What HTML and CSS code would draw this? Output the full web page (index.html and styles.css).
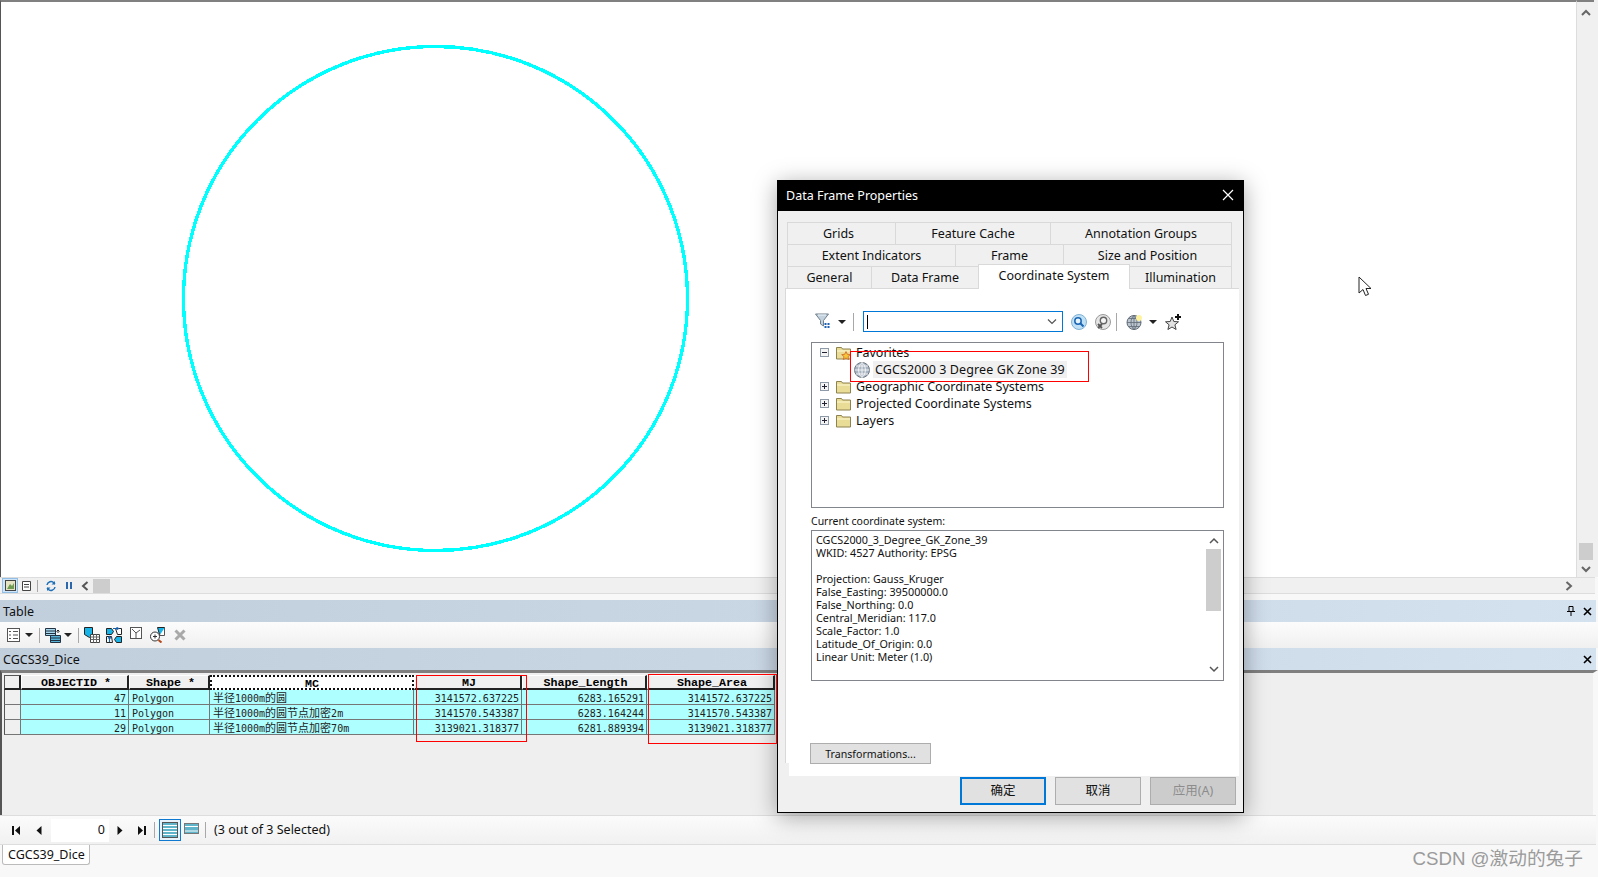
FILE: index.html
```html
<!DOCTYPE html>
<html lang="en">

<head>
  <meta charset="UTF-8">
  <title>Data Frame Properties</title>
  <link rel="stylesheet" href="styles.css">
</head>

<body>
  <div class="app">

    <!-- Map view -->
    <div class="map-row">
      <div class="map">
        <svg class="map-canvas" width="1575" height="575" viewBox="0 0 1575 575">
          <circle cx="434.500" cy="296.500" r="252" fill="none" stroke="#00ffff" stroke-width="3.400" shape-rendering="crispEdges"/>
        </svg>
      </div>
      <div class="vscroll">
        <svg class="chev" width="10" height="8" viewBox="0 0 10 8"><path d="M1 6l4-4 4 4" fill="none" stroke="#666" stroke-width="2"/></svg>
        <div class="vscroll-track"></div>
        <div class="vscroll-thumb"></div>
        <svg class="chev" width="10" height="8" viewBox="0 0 10 8"><path d="M1 2l4 4 4-4" fill="none" stroke="#666" stroke-width="2"/></svg>
      </div>
    </div>

    <!-- Map status bar -->
    <div class="map-bar">
      <span class="view-btn view-btn-on">
        <svg width="11" height="11" viewBox="0 0 11 11"><rect x=".5" y=".5" width="10" height="10" fill="#e6e2c4" stroke="#444"/><path d="M2 9l3-5 2 2 2-3v6z" fill="#6f9a52"/></svg>
      </span>
      <span class="view-btn">
        <svg width="9" height="10" viewBox="0 0 9 10"><path d="M.5.5h8v9h-8z" fill="#fff" stroke="#444"/><path d="M2 3.500h5M2 6h5" stroke="#444"/></svg>
      </span>
      <span class="sep"></span>
      <svg class="bar-icon" width="12" height="12" viewBox="0 0 12 12"><path d="M2 5a4 4 0 0 1 7-2l1 1M10 7a4 4 0 0 1-7 2L2 8" fill="none" stroke="#1e6fb8" stroke-width="1.5"/><path d="M10 1v3.500H6.500zM2 11V7.500h3.500z" fill="#1e6fb8"/></svg>
      <svg class="bar-icon" width="8" height="9" viewBox="0 0 8 9"><path d="M1 1h2v7H1zM5 1h2v7H5z" fill="#2a67ad"/></svg>
      <svg class="bar-icon bar-back" width="8" height="10" viewBox="0 0 8 10"><path d="M6.500 1L2 5l4.500 4" fill="none" stroke="#555" stroke-width="2"/></svg>
      <div class="hthumb"></div>
      <svg class="bar-forward" width="8" height="10" viewBox="0 0 8 10"><path d="M1.500 1L6 5 1.500 9" fill="none" stroke="#666" stroke-width="2"/></svg>
    </div>

    <!-- Table window -->
    <div class="title-bar table-title">
      <span>Table</span>
      <span class="title-tools">
        <svg width="8" height="10" viewBox="0 0 8 10"><path d="M2 .5h4v5H2zM0 5.500h8M4 6v4" fill="none" stroke="#000"/></svg>
        <svg width="9" height="9" viewBox="0 0 9 9"><path d="M1 1l7 7M8 1L1 8" stroke="#000" stroke-width="1.600"/></svg>
      </span>
    </div>

    <div class="table-tools">
      <svg class="tool-list" width="13" height="14" viewBox="0 0 13 14"><rect x=".5" y=".5" width="12" height="13" fill="#fff" stroke="#555"/><path d="M6 3.500h5M6 7h5M6 10.500h5" stroke="#555"/><path d="M2 3h2v1H2zM2 6.500h2v1H2zM2 10h2v1H2z" fill="#555"/></svg>
      <span class="caret"></span>
      <span class="sep"></span>
      <svg class="tool-rel" width="16" height="15" viewBox="0 0 16 15"><path d="M.5.5h10v7H.5z" fill="#a8d8ee" stroke="#234"/><path d="M.5 3h10M.5 5.500h10" stroke="#234"/><path d="M5.500 7.500h10v7h-10z" fill="#57b2d8" stroke="#234"/><path d="M5.500 10h10M5.500 12.500h10" stroke="#234"/><path d="M13 2v3M11.500 3.500l1.500-1.500 1.500 1.500" fill="none" stroke="#222"/></svg>
      <span class="caret"></span>
      <span class="sep"></span>
      <svg class="tool-ic" width="16" height="16" viewBox="0 0 16 16"><path d="M.5.500h8v8l-3 2-5-3z" fill="#16b4e8" stroke="#222"/><path d="M6.500 7.500h9v8h-9z" fill="#fff" stroke="#444"/><path d="M6.500 10h9M6.500 12.500h9M9.500 7.500v8M12.500 7.500v8" stroke="#666"/></svg>
      <svg class="tool-ic" width="16" height="16" viewBox="0 0 16 16"><path d="M.5 1.500h5l2 3-2 3h-5zM15.500 15.500h-5l-2-3 2-3h5z" fill="#16b4e8" stroke="#222"/><path d="M9.500 1.500h6v6h-4zM.5 9.500h5l1 6h-6z" fill="#fff" stroke="#222"/><path d="M7 1.500h5M10.500.3l2 1.200-2 1.200M3.500 15v-5M2 11.500l1.500-2 1.500 2" fill="none" stroke="#1560ad" stroke-width="1.200"/></svg>
      <svg class="tool-ic tool-clear" width="12" height="12" viewBox="0 0 12 12"><rect x=".5" y=".5" width="11" height="11" fill="#fff" stroke="#555"/><path d="M2 2l4 4 4-3M6 6v5" fill="none" stroke="#555"/></svg>
      <svg class="tool-ic tool-zoom" width="16" height="16" viewBox="0 0 16 16"><path d="M8.500.500h7v7h-5z" fill="#16b4e8" stroke="#222"/><path d="M10.500 8.500h5V1" fill="#fff" stroke="#555"/><circle cx="6" cy="9.500" r="4.500" fill="#fff" stroke="#333"/><path d="M4 9.500h4M6 7.500v4" stroke="#333"/><path d="M9.500 13l3 2.500" stroke="#b2481c" stroke-width="2"/></svg>
      <svg class="tool-ic" width="12" height="12" viewBox="0 0 12 12"><path d="M1.500 1.500l9 9M10.500 1.500l-9 9" stroke="#a9a9a9" stroke-width="3"/></svg>
    </div>

    <div class="title-bar layer-title">
      <span>CGCS39_Dice</span>
      <span class="title-tools">
        <svg width="9" height="9" viewBox="0 0 9 9"><path d="M1 1l7 7M8 1L1 8" stroke="#000" stroke-width="1.600"/></svg>
      </span>
    </div>

    <div class="grid-area">
      <div class="grid-row">
        <div class="cell-h"></div>
        <div class="cell-h">OBJECTID *</div>
        <div class="cell-h">Shape *</div>
        <div class="cell-h cell-focus">MC</div>
        <div class="cell-h">MJ</div>
        <div class="cell-h">Shape_Length</div>
        <div class="cell-h">Shape_Area</div>
      </div>
      <div class="grid-row">
        <div class="cell-sel"></div>
        <div class="cell num">47</div>
        <div class="cell">Polygon</div>
        <div class="cell"><span class="cjk">半径</span>1000m<span class="cjk">的圆</span></div>
        <div class="cell num">3141572.637225</div>
        <div class="cell num">6283.165291</div>
        <div class="cell num">3141572.637225</div>
      </div>
      <div class="grid-row">
        <div class="cell-sel"></div>
        <div class="cell num">11</div>
        <div class="cell">Polygon</div>
        <div class="cell"><span class="cjk">半径</span>1000m<span class="cjk">的圆节点加密</span>2m</div>
        <div class="cell num">3141570.543387</div>
        <div class="cell num">6283.164244</div>
        <div class="cell num">3141570.543387</div>
      </div>
      <div class="grid-row">
        <div class="cell-sel"></div>
        <div class="cell num">29</div>
        <div class="cell">Polygon</div>
        <div class="cell"><span class="cjk">半径</span>1000m<span class="cjk">的圆节点加密</span>70m</div>
        <div class="cell num">3139021.318377</div>
        <div class="cell num">6281.889394</div>
        <div class="cell num">3139021.318377</div>
      </div>
    </div>

    <!-- Record navigation -->
    <div class="nav-bar">
      <svg class="nav-first" width="9" height="9" viewBox="0 0 9 9"><path d="M0 0h2v9H0zM8 0v9L3 4.500z" fill="#111"/></svg>
      <svg class="nav-prev" width="6" height="9" viewBox="0 0 6 9"><path d="M5.500 0v9L.5 4.500z" fill="#111"/></svg>
      <div class="nav-input">0</div>
      <svg class="nav-next" width="6" height="9" viewBox="0 0 6 9"><path d="M.5 0v9l5-4.500z" fill="#111"/></svg>
      <svg class="nav-last" width="9" height="9" viewBox="0 0 9 9"><path d="M1 0v9l5-4.500zM7 0h2v9H7z" fill="#111"/></svg>
      <span class="sep"></span>
      <span class="rec-btn rec-btn-on">
        <svg width="16" height="16" viewBox="0 0 16 16"><rect x=".5" y=".5" width="15" height="15" fill="#5fb4c9" stroke="#555"/><path d="M1 3.500h14M1 6.500h14M1 9.500h14M1 12.500h14" stroke="#fff"/></svg>
      </span>
      <svg class="rec-plain" width="15" height="11" viewBox="0 0 15 11"><rect x=".5" y=".5" width="14" height="10" fill="#5fb4c9" stroke="#777"/><path d="M1 3.500h13M1 8h13" stroke="#fff"/></svg>
      <span class="sep"></span>
      <span class="nav-text">(3 out of 3 Selected)</span>
    </div>

    <div class="tab-strip">
      <div class="table-tab">CGCS39_Dice</div>
    </div>
  </div>

  <!-- Red markup drawn over the screenshot -->
  <div class="mark mark-mj"></div>
  <div class="mark mark-area"></div>

  <!-- Mouse pointer -->
  <svg class="pointer" width="14" height="21" viewBox="0 0 14 21"><path d="M1 1v16l4-3.500 2.500 6 3-1.200-2.500-5.800h5z" fill="#fff" stroke="#222"/></svg>

  <!-- Dialog -->
  <div class="dialog">
    <div class="dialog-title">
      <span>Data Frame Properties</span>
      <svg width="12" height="12" viewBox="0 0 12 12"><path d="M1 1l10 10M11 1L1 11" stroke="#fff" stroke-width="1.200"/></svg>
    </div>

    <div class="tabs">
      <div class="tab-row tab-row-a">
        <div class="tab tab-grids">Grids</div>
        <div class="tab">Feature Cache</div>
        <div class="tab">Annotation Groups</div>
      </div>
      <div class="tab-row tab-row-b">
        <div class="tab">Extent Indicators</div>
        <div class="tab">Frame</div>
        <div class="tab">Size and Position</div>
      </div>
      <div class="tab-row tab-row-c">
        <div class="tab">General</div>
        <div class="tab">Data Frame</div>
        <div class="tab tab-active">Coordinate System</div>
        <div class="tab">Illumination</div>
      </div>
    </div>

    <div class="panel">
      <div class="cs-tools">
        <svg class="ic-funnel" width="16" height="17" viewBox="0 0 16 17"><path d="M.5 1h13L8.500 7.500V13L5.500 11V7.500z" fill="#c3d2de" stroke="#6f7f8b"/><path d="M3 2h8" stroke="#eef4f8"/><path d="M9.500 10h2v2h-2zM12.500 10h2v2h-2zM9.500 13h2v2h-2zM12.500 13h2v2h-2z" fill="#1d62b5"/></svg>
        <span class="caret caret-funnel"></span>
        <span class="sep sep-combo"></span>
        <div class="combo">
          <span class="combo-cursor"></span>
          <svg width="10" height="6" viewBox="0 0 10 6"><path d="M1 .5l4 4 4-4" fill="none" stroke="#555" stroke-width="1.200"/></svg>
        </div>
        <svg class="ic-search" width="16" height="16" viewBox="0 0 16 16"><circle cx="8" cy="8" r="7.500" fill="#bfe0f5" stroke="#7eb1d4"/><circle cx="7" cy="7" r="3.200" fill="#e6f4fc" stroke="#1c66b3" stroke-width="1.500"/><path d="M9.500 9.500l3 3" stroke="#1c66b3" stroke-width="2"/></svg>
        <svg class="ic-clear" width="16" height="16" viewBox="0 0 16 16"><circle cx="8" cy="8" r="7.500" fill="#e6e6e6" stroke="#9a9a9a"/><circle cx="8.500" cy="6.500" r="3.200" fill="#f5f5f5" stroke="#666" stroke-width="1.400"/><path d="M3 10l4 4M7 10l-4 4" stroke="#555" stroke-width="1.800"/></svg>
        <span class="sep sep-globe"></span>
        <svg class="ic-globe" width="17" height="16" viewBox="0 0 17 16"><circle cx="8" cy="8.500" r="7" fill="#bcc6d0" stroke="#5f6a75"/><path d="M1 8.500h14M8 1.500v14M3 4.500h10M3 12.500h10M8 1.500c-4 3-4 11 0 14M8 1.500c4 3 4 11 0 14" fill="none" stroke="#5f6a75" stroke-width=".8"/><circle cx="13" cy="4" r="3" fill="#fff3a0"/></svg>
        <span class="caret caret-globe"></span>
        <svg class="ic-star" width="17" height="16" viewBox="0 0 17 16"><path d="M7 3l1.800 4.500 4.700.3-3.600 3 1.200 4.700L7 13l-4.100 2.500 1.200-4.700-3.600-3 4.700-.3z" fill="#e2e2e2" stroke="#444"/><path d="M13 0v6M10 3h6" stroke="#111" stroke-width="2"/></svg>
      </div>

      <div class="tree">
        <div class="tree-row">
          <span class="expander"><svg width="9" height="9" viewBox="0 0 9 9"><rect x=".5" y=".5" width="8" height="8" fill="#f4f4f4" stroke="#8e9aa8"/><path d="M2 4.500h5" stroke="#223"/></svg></span>
          <svg class="folder" width="15" height="14" viewBox="0 0 15 14"><path d="M.5 1.500h5l1 1.500h8v10H.5z" fill="#e9dc97" stroke="#8d8250"/><path d="M1 5h13" stroke="#fff8d2"/><path d="M10 5.500l1.300 2.800 3 .3-2.300 2 .7 3-2.700-1.600-2.700 1.600.7-3-2.300-2 3-.3z" fill="#f6c63a" stroke="#d2661f" stroke-width=".8"/></svg>
          <span class="tree-label">Favorites</span>
        </div>
        <div class="tree-row tree-child">
          <svg class="globe" width="16" height="16" viewBox="0 0 16 16"><circle cx="8" cy="8" r="7.500" fill="#a9b4c2" stroke="#6c7682"/><path d="M.5 8h15M8 .5v15M2 4h12M2 12h12M8 .5c-4.500 3-4.500 12 0 15M8 .5c4.500 3 4.500 12 0 15" fill="none" stroke="#fff" stroke-width=".8"/></svg>
          <span class="tree-label tree-hit">CGCS2000 3 Degree GK Zone 39</span>
        </div>
        <div class="tree-row">
          <span class="expander"><svg width="9" height="9" viewBox="0 0 9 9"><rect x=".5" y=".5" width="8" height="8" fill="#f4f4f4" stroke="#8e9aa8"/><path d="M2 4.500h5M4.500 2v5" stroke="#223"/></svg></span>
          <svg class="folder" width="15" height="14" viewBox="0 0 15 14"><path d="M.5 1.500h5l1 1.500h8v10H.5z" fill="#e9dc97" stroke="#8d8250"/><path d="M1 5h13" stroke="#fff8d2"/></svg>
          <span class="tree-label">Geographic Coordinate Systems</span>
        </div>
        <div class="tree-row">
          <span class="expander"><svg width="9" height="9" viewBox="0 0 9 9"><rect x=".5" y=".5" width="8" height="8" fill="#f4f4f4" stroke="#8e9aa8"/><path d="M2 4.500h5M4.500 2v5" stroke="#223"/></svg></span>
          <svg class="folder" width="15" height="14" viewBox="0 0 15 14"><path d="M.5 1.500h5l1 1.500h8v10H.5z" fill="#e9dc97" stroke="#8d8250"/><path d="M1 5h13" stroke="#fff8d2"/></svg>
          <span class="tree-label">Projected Coordinate Systems</span>
        </div>
        <div class="tree-row">
          <span class="expander"><svg width="9" height="9" viewBox="0 0 9 9"><rect x=".5" y=".5" width="8" height="8" fill="#f4f4f4" stroke="#8e9aa8"/><path d="M2 4.500h5M4.500 2v5" stroke="#223"/></svg></span>
          <svg class="folder" width="15" height="14" viewBox="0 0 15 14"><path d="M.5 1.500h5l1 1.500h8v10H.5z" fill="#e9dc97" stroke="#8d8250"/><path d="M1 5h13" stroke="#fff8d2"/></svg>
          <span class="tree-label">Layers</span>
        </div>
        <div class="mark mark-fav"></div>
      </div>

      <div class="cs-label">Current coordinate system:</div>
      <div class="cs-box">
        <div class="cs-text">
          <div>CGCS2000_3_Degree_GK_Zone_39</div>
          <div>WKID: 4527 Authority: EPSG</div>
          <div>&nbsp;</div>
          <div>Projection: Gauss_Kruger</div>
          <div>False_Easting: 39500000.0</div>
          <div>False_Northing: 0.0</div>
          <div>Central_Meridian: 117.0</div>
          <div>Scale_Factor: 1.0</div>
          <div>Latitude_Of_Origin: 0.0</div>
          <div>Linear Unit: Meter (1.0)</div>
        </div>
        <div class="cs-scroll">
          <svg width="10" height="7" viewBox="0 0 10 7"><path d="M1 6l4-4 4 4" fill="none" stroke="#555" stroke-width="1.500"/></svg>
          <div class="cs-thumb"></div>
          <svg width="10" height="7" viewBox="0 0 10 7"><path d="M1 1l4 4 4-4" fill="none" stroke="#555" stroke-width="1.500"/></svg>
        </div>
      </div>

      <div class="btn btn-transform">Transformations...</div>
    </div>

    <div class="dialog-actions">
      <div class="btn btn-main btn-ok">确定</div>
      <div class="btn btn-main">取消</div>
      <div class="btn btn-main btn-off">应用(A)</div>
    </div>
  </div>

  <div class="watermark">CSDN @激动的兔子</div>
</body>

</html>
```

FILE: styles.css
```css
/* General setup */
* {
  box-sizing: border-box;
}

body {
  margin: 0;
  width: 1598px;
  height: 877px;
  position: relative;
  overflow: hidden;
  background: #f8f8f8;
  color: #111;
  font-family: "Noto Sans", "Noto Sans CJK SC", sans-serif;
  font-size: 12.5px;
}

.app {
  display: flex;
  flex-direction: column;
  height: 877px;
}

.sep {
  display: inline-block;
  width: 1px;
  height: 16px;
  background: #a8a8a8;
  flex: none;
}

.caret {
  width: 0;
  height: 0;
  flex: none;
  border-left: 4px solid transparent;
  border-right: 4px solid transparent;
  border-top: 4px solid #222;
}

/* Map view */
.map-row {
  display: flex;
  height: 577px;
  background: #f0f0f0;
}

.map {
  width: 1577px;
  border-top: 2px solid #808080;
  border-left: 1px solid #555;
  border-right: 1px solid #ddd;
  background: #fff;
}

.map-canvas {
  display: block;
}

.vscroll {
  width: 17px;
  border-top: 2px solid #808080;
  display: flex;
  flex-direction: column;
  align-items: center;
  padding: 7px 0 4px;
}

.vscroll-track {
  flex: 1;
}

.vscroll-thumb {
  width: 14px;
  height: 17px;
  margin-bottom: 5px;
  background: #cdcdcd;
}

/* Map status bar */
.map-bar {
  display: flex;
  align-items: center;
  height: 17px;
  width: 1595px;
  padding-left: 2px;
  background: #f0f0f0;
  border-top: 1px solid #ddd;
  border-bottom: 1px solid #ddd;
}

.view-btn {
  width: 16px;
  height: 15px;
  display: flex;
  justify-content: center;
  align-items: center;
}

.view-btn-on {
  background: #cfe4f6;
  border: 1px solid #93bfe5;
}

.map-bar .sep {
  height: 12px;
  margin: 0 7px 0 3px;
}

.bar-icon {
  margin-right: 8px;
}

.bar-back {
  margin-right: 4px;
}

.hthumb {
  width: 17px;
  height: 14px;
  background: #cdcdcd;
}

.bar-forward {
  margin-left: auto;
  margin-right: 22px;
}

/* Table window */
.title-bar {
  display: flex;
  justify-content: space-between;
  align-items: center;
  height: 22px;
  width: 1596px;
  padding: 0 4px 0 3px;
  background: linear-gradient(90deg, #c1cedc, #c9d6e4 50%, #d4e1ef);
}

.table-title {
  margin-top: 6px;
}

.title-tools {
  display: flex;
  align-items: center;
  gap: 8px;
}

.table-tools {
  display: flex;
  align-items: center;
  height: 26px;
  padding-left: 7px;
  background: linear-gradient(#fcfcfc, #f0f0f0);
}

.tool-list {
  margin-right: 5px;
}

.table-tools .caret {
  margin-right: 6px;
}

.table-tools .sep {
  height: 15px;
  margin-right: 5px;
}

.tool-rel {
  margin-right: 3px;
}

.tool-ic {
  margin-right: 6px;
}

.tool-clear {
  margin: 0 7px 4px 2px;
}

.tool-zoom {
  margin-right: 9px;
}

/* Attribute grid */
.grid-area {
  height: 145px;
  padding: 2px 0 0 2px;
  background: #efefef;
  border-top: 3px solid #7f7f7f;
  border-left: 2px solid #555;
  border-right: 5px solid #f8f8f8;
  font-family: "DejaVu Sans Mono", monospace;
  font-size: 10px;
  color: #222;
}

.grid-row {
  display: grid;
  grid-template-columns: 17px 108px 81px 204px 108px 125px 128px;
  grid-template-rows: 15px;
  height: 15px;
}

.cell-h {
  display: flex;
  justify-content: center;
  align-items: center;
  padding: 2px 0 0 3px;
  background: #f0f0f0;
  border-top: 1px solid #fff;
  border-left: 1px solid #fff;
  border-right: 2px solid #222;
  border-bottom: 2px solid #222;
  font-family: "Liberation Mono", monospace;
  font-size: 11.67px;
  font-weight: bold;
  line-height: 12px;
  color: #000;
  white-space: pre;
}

.cell-h:first-child {
  border-left: 1px solid #555;
  border-top: 1px solid #555;
}

.cell-focus {
  padding-left: 0;
  border: 2px dotted #111;
  background: #fff;
}

.cell,
.cell-sel {
  border-right: 1px solid #767676;
  border-bottom: 1px solid #767676;
  line-height: 14px;
  white-space: nowrap;
  padding: 0 3px;
}

.cell {
  background: #aeffff;
  padding-top: 2px;
}

.cell-sel {
  background: #f0f0f0;
  border-left: 1px solid #555;
}

.num {
  text-align: right;
  padding-right: 2px;
}

.cjk {
  font-family: "Noto Sans CJK SC", sans-serif;
  font-size: 11px;
  line-height: 1;
}

/* Record navigation */
.nav-bar {
  display: flex;
  align-items: center;
  height: 30px;
  padding-left: 12px;
  background: linear-gradient(#fbfbfb, #f1f1f1);
  border-top: 1px solid #ddd;
  border-bottom: 1px solid #ddd;
  width: 1596px;
}

.nav-first {
  margin-right: 15px;
}

.nav-prev {
  margin-right: 9px;
}

.nav-input {
  width: 58px;
  height: 23px;
  line-height: 21px;
  background: #fff;
  text-align: right;
  padding-right: 4px;
  margin-right: 8px;
}

.nav-next {
  margin-right: 14px;
}

.nav-last {
  margin-right: 8px;
}

.rec-btn {
  display: flex;
  justify-content: center;
  align-items: center;
  width: 22px;
  height: 22px;
  margin-left: 4px;
  border: 1px solid #0f78d0;
  background: #e8f2fa;
}

.rec-plain {
  margin: 0 6px 3px 3px;
}

.nav-text {
  margin: 0 0 2px 8px;
}

.tab-strip {
  flex: 1;
  padding-left: 2px;
  background: #f8f8f8;
}

.table-tab {
  width: 88px;
  height: 20px;
  line-height: 19px;
  padding-left: 5px;
  background: #fff;
  border: 1px solid #bbb;
  border-top: 0;
  border-radius: 0 0 3px 3px;
}

/* Red markup, drawn over the rest */
.mark {
  position: absolute;
  border: 1px solid #f00;
  z-index: 5;
}

.mark-mj {
  left: 416px;
  top: 675px;
  width: 111px;
  height: 67px;
}

.mark-area {
  left: 648px;
  top: 674px;
  width: 129px;
  height: 70px;
}

.mark-fav {
  left: 38px;
  top: 8px;
  width: 239px;
  height: 31px;
}

.pointer {
  position: absolute;
  left: 1358px;
  top: 276px;
}

/* Dialog */
.dialog {
  position: absolute;
  left: 777px;
  top: 180px;
  width: 467px;
  height: 633px;
  background: #f0f0f0;
  border: 1px solid #000;
  border-top: 0;
  box-shadow: 0 4px 22px rgba(0, 0, 0, 0.35);
  z-index: 3;
}

.dialog-title {
  display: flex;
  justify-content: space-between;
  align-items: center;
  height: 31px;
  padding: 0 9px 1px 8px;
  background: #000;
  color: #fff;
}

.tabs {
  margin: 11px 9px 0;
  width: 445px;
}

.tab-row {
  display: grid;
  height: 22px;
}

.tab-row-a {
  grid-template-columns: 108px 155px 182px;
}

.tab-row-b {
  grid-template-columns: 168px 108px 169px;
}

.tab-row-c {
  grid-template-columns: 84px 107px 151px 103px;
}

.tab {
  height: 22px;
  line-height: 21px;
  text-align: center;
  background: #f0f0f0;
  border: 1px solid #d9d9d9;
  border-width: 1px 1px 0 1px;
  margin-right: -1px;
}

.tab:last-child {
  margin-right: 0;
}

.tab-grids {
  padding-right: 6px;
}

.tab-active {
  position: relative;
  height: 25px;
  margin-top: -2px;
  line-height: 21px;
  background: #fff;
  z-index: 1;
}

.panel {
  position: relative;
  width: 454px;
  height: 488px;
  margin-left: 7px;
  padding: 22px 0 0 25px;
  background: #fff;
  border-top: 1px solid #d9d9d9;
  border-left: 1px solid #d9d9d9;
}

/* notch left of the panel foot */
.panel::after {
  content: "";
  position: absolute;
  left: -1px;
  bottom: 0;
  width: 4px;
  height: 13px;
  background: #f0f0f0;
}

.cs-tools {
  display: flex;
  align-items: center;
  height: 21px;
}

.ic-funnel {
  margin-left: 4px;
}

.caret-funnel {
  margin-left: 7px;
}

.sep-combo {
  height: 18px;
  margin: 0 9px 0 7px;
}

.combo {
  display: flex;
  justify-content: space-between;
  align-items: center;
  width: 200px;
  height: 21px;
  padding: 0 5px 0 3px;
  border: 1px solid #0078d7;
}

.combo-cursor {
  width: 1px;
  height: 14px;
  background: #000;
}

.ic-search,
.ic-clear {
  margin-left: 8px;
}

.sep-globe {
  height: 18px;
  margin: 0 9px 0 5px;
}

.caret-globe {
  margin: 0 8px 0 6px;
}

.tree {
  position: relative;
  width: 413px;
  height: 166px;
  margin-top: 10px;
  padding: 1px 0 0 8px;
  border: 1px solid #82868c;
  line-height: 17px;
}

.tree-row {
  display: flex;
  align-items: center;
  height: 17px;
}

.expander {
  display: flex;
  width: 16px;
}

.folder {
  margin-right: 5px;
}

.tree-child {
  padding-left: 34px;
}

.globe {
  margin-right: 3px;
}

.tree-hit {
  background: #f0f0f0;
  padding: 0 2px;
  letter-spacing: 0.1px;
}

.cs-label {
  margin-top: 5px;
  height: 17px;
  line-height: 17px;
  font-size: 10.5px;
}

.cs-box {
  display: flex;
  justify-content: space-between;
  width: 413px;
  height: 151px;
  padding: 2px 2px 2px 4px;
  border: 1px solid #82868c;
  font-size: 10.8px;
  line-height: 13px;
}

.cs-scroll {
  display: flex;
  flex-direction: column;
  align-items: center;
  width: 15px;
  padding-top: 4px;
}

.cs-thumb {
  width: 15px;
  height: 62px;
  margin: 5px 0 55px;
  background: #cdcdcd;
}

.btn {
  display: flex;
  justify-content: center;
  align-items: center;
  background: #e1e1e1;
  border: 1px solid #adadad;
}

.btn-transform {
  width: 121px;
  height: 21px;
  margin: 62px 0 0 -1px;
  font-size: 10.6px;
}

.dialog-actions {
  display: flex;
  justify-content: flex-end;
  gap: 9px;
  margin-top: 1px;
  padding-right: 7px;
}

.btn-main {
  width: 86px;
  height: 28px;
  padding-bottom: 3px;
}

.btn-ok {
  border: 2px solid #0078d7;
}

.btn-off {
  background: #ccc;
  color: #8c8c8c;
}

.watermark {
  position: absolute;
  right: 15px;
  top: 848px;
  font-family: "Liberation Sans", "Noto Sans CJK SC", sans-serif;
  font-size: 18.7px;
  line-height: 22px;
  color: #9b9b9b;
}
```
